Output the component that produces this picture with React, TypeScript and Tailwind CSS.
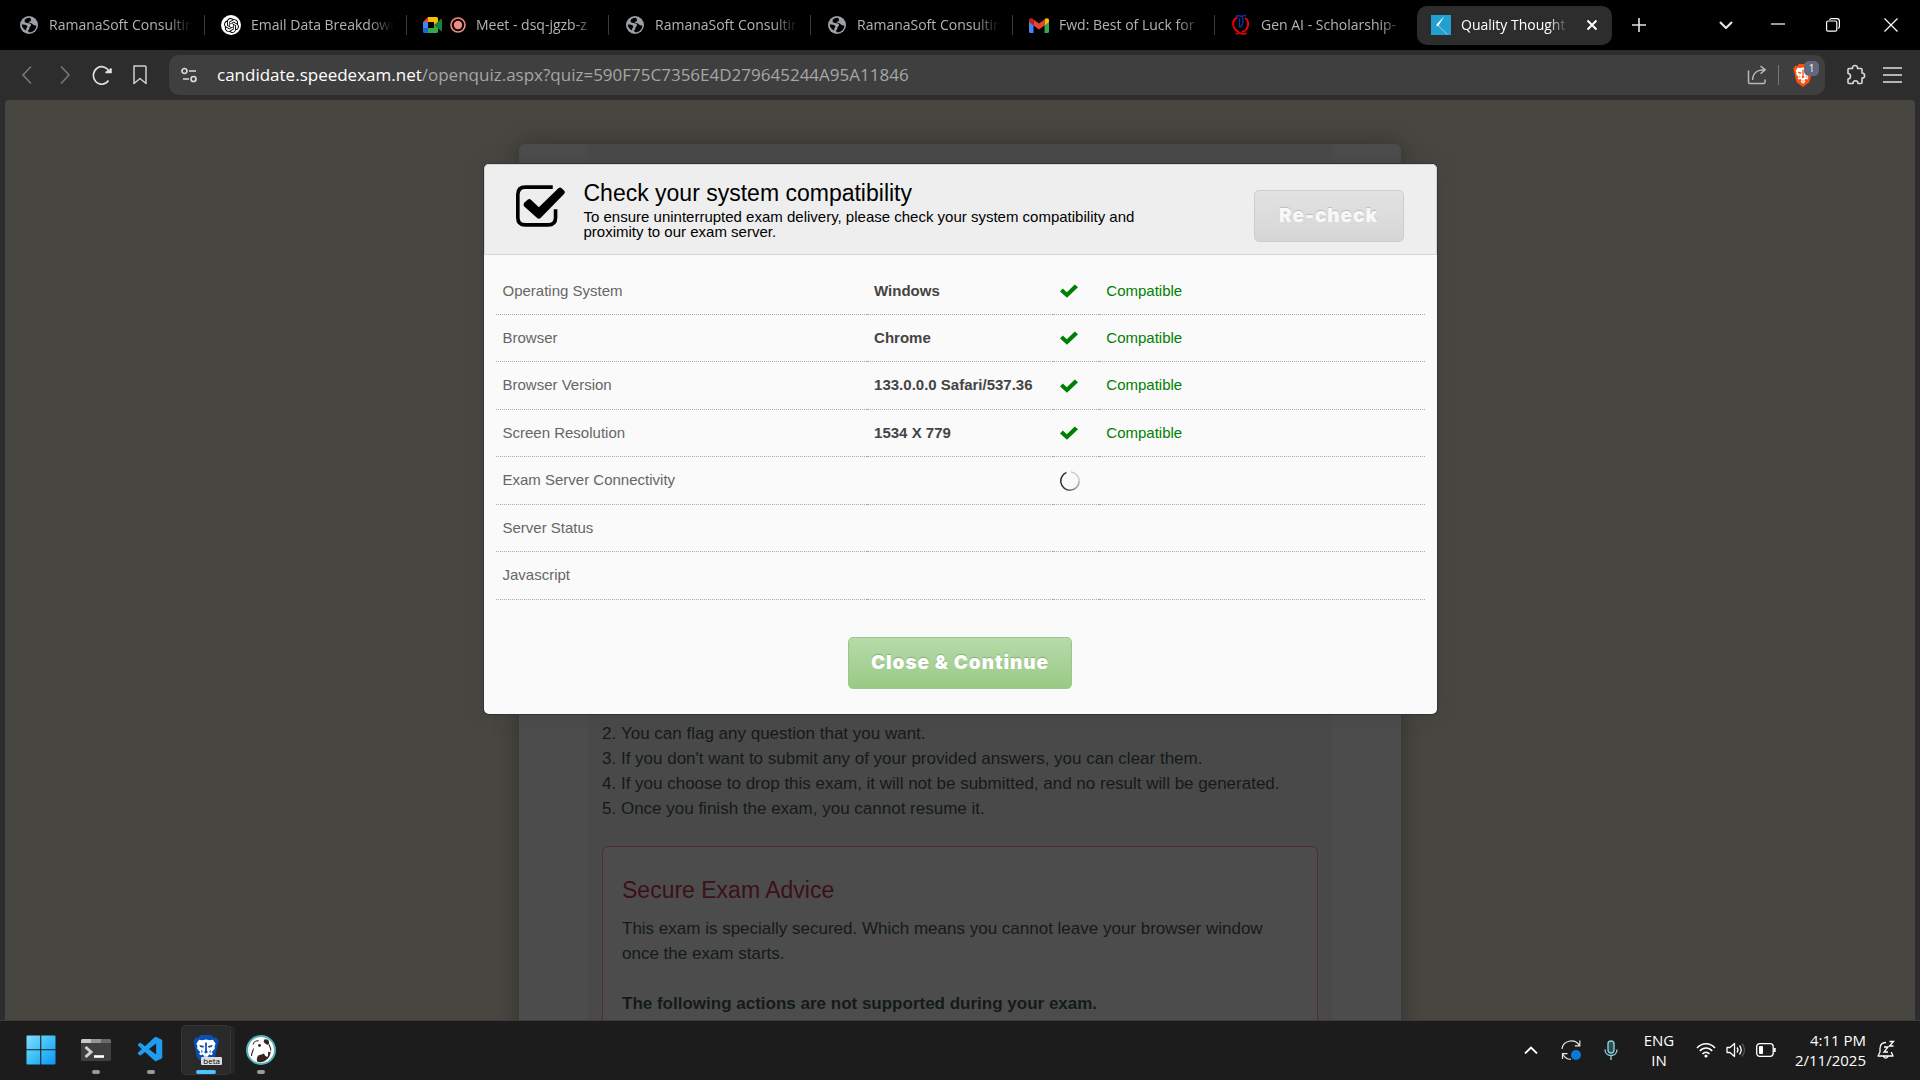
import React from "react";
import { SiOpenai } from "react-icons/si";
import { VscVscode } from "react-icons/vsc";

const uiFont = "font-['Open_Sans','Noto_Sans',sans-serif]";

function GlobeIcon() {
  return (
    <span className="flex h-5 w-5 shrink-0 items-center justify-center">
      <svg viewBox="0 0 18 18" className="h-[18px] w-[18px]">
        <circle cx="9" cy="9" r="9" fill="#9aa0a6" />
        <path d="M10 1.800C7.500 1.700 5.200 2.900 4.600 4.300c-.5 1.600.9 2.600 2.600 2.700 2.400.1 3.600.5 3.800 2 .1 1.400-1.500 1.500-1.600 2.900-.1 1.400-.8 2.300-1.800 2.300l1.400 2c4 .2 7.300-2.800 7.300-6.800-1.200.4-2.300.2-3.300-.9-.9-1-2.400-1.600-3.600-1.700-.9-.1-.8-1 .1-1.200 1-.2 1.700-.9 1.500-1.900z" fill="#000" />
        <path d="M1.800 8.600c1.800-.3 3.600 0 4.700.7 1.200.8.900 2 .1 2.700-.7.600-.5 1.600-.3 2.600C3.500 13.500 1.800 11.300 1.800 8.600z" fill="#000" />
      </svg>
    </span>
  );
}

function ChatIcon() {
  return (
    <span className="flex h-5 w-5 shrink-0 items-center justify-center rounded-full bg-white text-black">
      <SiOpenai size={15} />
    </span>
  );
}

function MeetIcon() {
  return (
    <svg viewBox="0 0 20 16" className="h-4 w-5 shrink-0">
      <path d="M0 5L5 0v5z" fill="#ea4335" />
      <path d="M5 0h8.500Q15 0 15 1.500V7l-4 2V5H5z" fill="#fbbc04" />
      <path d="M0 5h5v6H0z" fill="#4285f4" />
      <path d="M0 11h5v5H1.500Q0 16 0 14.500z" fill="#1967d2" />
      <path d="M5 11h6V8l4-2v8.500q0 1.500-1.500 1.500H5z" fill="#34a853" />
      <path d="M11 8l7-6q1-.8 1 .4v11.200q0 1.200-1 .4z" fill="#188038" />
    </svg>
  );
}

function RecordIcon() {
  return (
    <svg viewBox="0 0 16 16" className="h-4 w-4 shrink-0">
      <circle cx="8" cy="8" r="7" fill="none" stroke="#f28b82" strokeWidth="1.600" />
      <circle cx="8" cy="8" r="4.200" fill="#f28b82" />
    </svg>
  );
}

function GmailIcon() {
  return (
    <svg viewBox="0 0 20 15" className="h-[15px] w-5 shrink-0">
      <path d="M0 3v10.500Q0 15 1.500 15H4.500V6z" fill="#4285f4" />
      <path d="M20 3v10.500q0 1.500-1.500 1.500H15.500V6z" fill="#34a853" />
      <path d="M15.500 1.500l1.200-.9C18.300-.5 20 .6 20 2.200V4l-4.500 3.500z" fill="#fbbc04" />
      <path d="M4.500 7.500v-6L10 5.600l5.500-4.100v6L10 11.600z" fill="#ea4335" />
      <path d="M0 2.200C0 .6 1.700-.5 3.300.6l1.200.9v6L0 4z" fill="#c5221f" />
    </svg>
  );
}

function QIcon() {
  return (
    <svg viewBox="0 0 20 22" className="h-[22px] w-5 shrink-0" fill="none">
      <path d="M6.500 3.500C.5 5.500.5 15.500 8 18" stroke="#e8000b" strokeWidth="2" />
      <path d="M14 4c5 3 4 12-3 14" stroke="#e8000b" strokeWidth="2" />
      <path d="M5 20.500c2-2.600 4-1.800 6-.8s3 .5 4.500-.8" stroke="#e8000b" strokeWidth="1.600" />
      <path d="M5 2.800c2-2.200 4-.3 6-.6s2.500-.8 4-1" stroke="#0b34b0" strokeWidth="1.500" />
      <path d="M8.500 4v9.500M11.500 3c.8 3 .8 7-2 10.500" stroke="#0b34b0" strokeWidth="1.300" />
    </svg>
  );
}

function SpeedIcon() {
  return (
    <svg viewBox="0 0 20 20" className="h-5 w-5 shrink-0">
      <rect width="20" height="20" fill="#22a0cf" />
      <path d="M13.500 1L5 10l2 1.500z" fill="#fff" />
      <path d="M6.500 10l10 9.500L8 11.500z" fill="#fff" stroke="#fff" strokeWidth=".5" opacity=".6" />
    </svg>
  );
}

function LionShield({ fill, className }: { fill: string; className: string }) {
  return (
    <svg viewBox="0 0 24 28" className={className}>
      <path d="M7 0h10l2.300 2.600 2-.5L24 5.500l-1 3L20.500 20q-.5 2-2 3L12 28l-6.500-5q-1.500-1-2-3L1 8.500l-1-3 2.700-3.400 2 .5z" fill={fill} />
      <path d="M5.500 4.500l3 .5L12 4.200l3.500.8 3-.5L21 8.200l-1 2 .3 2.300-3 3.500 1.200 1.500-1.500 1.300-2-.5-1.300 1.500 1.300 1.400L12 24l-3-2.800 1.300-1.400L9 18.300l-2 .5-1.500-1.300L6.700 16l-3-3.500.3-2.300-1-2z" fill="#fff" />
      <path d="M5.800 9.300l4.500.9-.8 1.700-3-.6zM18.200 9.300l-4.500.9.8 1.700 3-.6zM11.200 7h1.600v7.500l1 1.500-1.800 1.200-1.800-1.200 1-1.500zM7.300 13.500l1.700 2.200-1 1zM16.700 13.500L15 15.700l1 1zM10 20.300h4l-2 1.400z" fill={fill} />
    </svg>
  );
}

const tabs: { title: string; icons: React.ReactNode }[] = [
  { title: "RamanaSoft Consulting", icons: <GlobeIcon /> },
  { title: "Email Data Breakdown", icons: <ChatIcon /> },
  { title: "Meet - dsq-jgzb-z", icons: <><MeetIcon /><RecordIcon /></> },
  { title: "RamanaSoft Consulting", icons: <GlobeIcon /> },
  { title: "RamanaSoft Consulting", icons: <GlobeIcon /> },
  { title: "Fwd: Best of Luck for", icons: <GmailIcon /> },
  { title: "Gen AI - Scholarship-", icons: <QIcon /> },
];

function TabBar() {
  return (
    <div className="flex h-[50px] shrink-0 items-center bg-black pl-[3px] text-sm">
      <div className="flex min-w-0 items-center">
        {tabs.map((t, i) => (
          <button
            key={i}
            className={
              "flex h-5 w-[202px] min-w-0 shrink items-center gap-[10px] pr-3 pl-4 text-[#b4b4b4] " +
              (i < tabs.length - 1 ? "border-r border-[#3a3a3a]" : "")
            }
          >
            <span className="flex items-center gap-[7px]">{t.icons}</span>
            <span className="min-w-0 flex-1 overflow-hidden text-left whitespace-nowrap [mask-image:linear-gradient(to_right,black_82%,transparent)]">
              {t.title}
            </span>
          </button>
        ))}
        <div className="flex h-[39px] w-[195px] items-center gap-[10px] rounded-[10px] bg-[#2d2d2d] px-[14px] text-white">
          <SpeedIcon />
          <span className="min-w-0 flex-1 overflow-hidden whitespace-nowrap [mask-image:linear-gradient(to_right,black_82%,transparent)]">
            Quality Thought
          </span>
          <button aria-label="Close tab" className="ml-2">
            <svg viewBox="0 0 12 12" className="h-3 w-3" stroke="#fff" strokeWidth="2">
              <path d="M1.500 1.500l9 9M10.500 1.500l-9 9" />
            </svg>
          </button>
        </div>
        <button aria-label="New tab" className="ml-5">
          <svg viewBox="0 0 14 14" className="h-[14px] w-[14px]" stroke="#e4e4e4" strokeWidth="1.600">
            <path d="M7 0v14M0 7h14" />
          </svg>
        </button>
      </div>
      <div className="ml-auto flex items-center pr-[22px]">
        <button aria-label="Search tabs" className="mr-[38px]">
          <svg viewBox="0 0 14 8" className="h-2 w-[14px]" fill="none" stroke="#e4e4e4" strokeWidth="2.200">
            <path d="M1 1l6 6 6-6" />
          </svg>
        </button>
        <button aria-label="Minimize" className="mr-[41px]">
          <svg viewBox="0 0 14 14" className="h-[14px] w-[14px]" stroke="#fff" strokeWidth="1.200">
            <path d="M0 6h14" />
          </svg>
        </button>
        <button aria-label="Restore" className="mr-[44px]">
          <svg viewBox="0 0 14 14" className="h-[14px] w-[14px]" fill="none" stroke="#fff" strokeWidth="1.200">
            <rect x=".6" y="3" width="10.200" height="10.200" rx="1.500" />
            <path d="M3.500 1.800Q4 .6 5.500.6H11q2.400 0 2.400 2.400v5.600q0 1.400-1.200 1.800" />
          </svg>
        </button>
        <button aria-label="Close window">
          <svg viewBox="0 0 14 14" className="h-[14px] w-[14px]" stroke="#fff" strokeWidth="1.200">
            <path d="M.5.5l13 13M13.500.5l-13 13" />
          </svg>
        </button>
      </div>
    </div>
  );
}

function Toolbar() {
  return (
    <div className="flex h-[50px] shrink-0 items-center bg-[#2d2d2d] pr-[18px] pl-4">
      <div className="flex items-center gap-[18px]">
        <button aria-label="Back">
          <svg viewBox="0 0 20 20" className="h-5 w-5" fill="none" stroke="#777" strokeWidth="1.600">
            <path d="M15 1.500L7 10l8 8.500" />
          </svg>
        </button>
        <button aria-label="Forward">
          <svg viewBox="0 0 20 20" className="h-5 w-5" fill="none" stroke="#777" strokeWidth="1.600">
            <path d="M7 1.500l8 8.500-8 8.500" />
          </svg>
        </button>
        <button aria-label="Reload">
          <svg viewBox="0 0 20 20" className="h-5 w-5" fill="none" stroke="#e0e0e0" strokeWidth="1.600">
            <path d="M17.500 7.500A8.300 8.800 0 1 0 16.500 15.500" />
            <path d="M13.500 7.500h5.500V3.500q-1.500 3-5.500 4z" fill="#e0e0e0" />
          </svg>
        </button>
        <button aria-label="Bookmark">
          <svg viewBox="0 0 20 20" className="h-5 w-5" fill="none" stroke="#d0d0d0" strokeWidth="1.500">
            <path d="M4 1h11q1 0 1 1v16.500l-6-5-6 5V2q0-1 1-1z" strokeLinejoin="round" />
          </svg>
        </button>
      </div>
      <div className="ml-[19px] flex h-10 min-w-0 flex-1 items-center rounded-[10px] bg-[#3f3f3f] pr-[6px] pl-3">
        <button aria-label="Site settings">
          <svg viewBox="0 0 16 16" className="h-4 w-4" fill="none" stroke="#dadada" strokeWidth="1.700">
            <circle cx="3.500" cy="4" r="2.500" />
            <path d="M8 4h7M2 12h6" />
            <circle cx="12.500" cy="12" r="2.500" />
          </svg>
        </button>
        <div className="ml-5 min-w-0 flex-1 overflow-hidden text-[17px] whitespace-nowrap text-[#a6a6a6]">
          <span className="text-white">candidate.speedexam.net</span>
          /openquiz.aspx?quiz=590F75C7356E4D279645244A95A11846
        </div>
        <button aria-label="Share">
          <svg viewBox="0 0 20 20" className="h-5 w-5" fill="none" stroke="#b8b8b8" strokeWidth="1.500">
            <path d="M1.500 5.500V17q0 1.500 1.500 1.500h13.500q1.500 0 1.500-1.500v-2.500" />
            <path d="M5.500 15C6 8 9.500 4.800 18 4.800M13.500 1l4.700 3.800-4.700 4" />
          </svg>
        </button>
        <span className="mx-[11px] h-5 w-px bg-[#777]" />
        <button aria-label="Brave Shields" className="relative flex h-7 w-[29px] items-center">
          <LionShield fill="#fb5012" className="ml-[3px] h-[23px] w-5" />
          <span className="absolute top-0 right-0 flex h-[15px] w-[15px] items-center justify-center rounded-[5px] bg-[#62677a] text-[10px] text-white">
            1
          </span>
        </button>
      </div>
      <button aria-label="Extensions" className="ml-[19px]">
        <svg viewBox="0 0 22 22" className="h-[22px] w-[22px]" fill="none" stroke="#d8d8d8" strokeWidth="1.600" strokeLinejoin="round">
          <path d="M5 4.500h3.500c-.8-4 5.800-4 5 0H17q1 0 1 1V9c3.500.4 3.500 5 0 5v4.500q0 1-1 1h-3c0-3.700-5-3.700-5 0H5q-1 0-1-1V15c3.300 0 3.300-5.500 0-5.500v-4q0-1 1-1z" />
        </svg>
      </button>
      <button aria-label="Menu" className="ml-[17px]">
        <svg viewBox="0 0 19 16" className="h-4 w-[19px]" stroke="#e0e0e0" strokeWidth="1.700">
          <path d="M0 1h19M0 8h19M0 15h19" />
        </svg>
      </button>
    </div>
  );
}

const checks: { name: string; value: string; state: "ok" | "loading" | "none" }[] = [
  { name: "Operating System", value: "Windows", state: "ok" },
  { name: "Browser", value: "Chrome", state: "ok" },
  { name: "Browser Version", value: "133.0.0.0 Safari/537.36", state: "ok" },
  { name: "Screen Resolution", value: "1534 X 779", state: "ok" },
  { name: "Exam Server Connectivity", value: "", state: "loading" },
  { name: "Server Status", value: "", state: "none" },
  { name: "Javascript", value: "", state: "none" },
];

function StateIcon({ state }: { state: string }) {
  if (state === "ok")
    return (
      <svg viewBox="0 0 18 14" className="h-[14px] w-[18px]" fill="#008000">
        <path d="M0 7.500L2.800 4.600l4 3.600L14.800.4 18 3.200 7 13.800z" />
      </svg>
    );
  if (state === "loading")
    return (
      <svg viewBox="0 0 20 20" className="h-5 w-5" fill="none" strokeWidth="1.400">
        <defs>
          <linearGradient id="spin" x1="0" y1="0" x2="1" y2="0">
            <stop offset="0" stopColor="#222" />
            <stop offset="1" stopColor="#aaa" />
          </linearGradient>
        </defs>
        <path d="M6.500 1.500A9.200 9.200 0 0 0 10 19.200a9.200 9.200 0 0 0 9.200-9.200" stroke="url(#spin)" />
        <path d="M19.200 10A9.200 9.200 0 0 0 11 1" stroke="#ccc" />
      </svg>
    );
  return null;
}

function CompatibilityDialog() {
  return (
    <section
      role="dialog"
      aria-labelledby="dialog-title"
      className="flex w-full max-w-[953px] flex-col rounded-[5px] bg-[#fafafa] shadow-[0_0_0_1px_#333,0_0_16px_rgba(60,60,60,0.5)]"
    >
      <header className="flex h-[91px] items-start rounded-t-[5px] border border-[#d5d5d5] bg-[#eeeeee] pr-8 pl-[31px]">
        <svg viewBox="0 0 148 125" className="mt-5 h-[42px] w-[49px] shrink-0">
          <path
            d="M111 5.500H28Q5.500 5.500 5.500 28v69q0 22.500 22.500 22.500h69q22.500 0 22.500-22.500V72"
            fill="none"
            stroke="#000"
            strokeWidth="11"
          />
          <path
            d="M25 53l11-10q5-3 10 1l23 22 59-57q5-5 10 0l7 7q5 5 0 10l-70 72q-6 6-12 0L25 64q-4-5 0-11z"
            fill="#000"
          />
        </svg>
        <div className="mt-3 ml-[19px] w-[560px] text-black">
          <h1 id="dialog-title" className="text-[23px] leading-8">Check your system compatibility</h1>
          <p className="text-[15px] leading-[15px]">
            To ensure uninterrupted exam delivery, please check your system compatibility and proximity to our exam server.
          </p>
        </div>
        <button className="mt-[25px] ml-auto h-[52px] w-[150px] rounded-[5px] border border-[#cdcdcd] bg-linear-to-b from-[#e2e2e2] to-[#d6d6d6] font-['Inter',sans-serif] text-[19px] font-black tracking-wider text-[#f8f8f8] [text-shadow:0_-1px_1px_rgba(0,0,0,0.15)]">
          Re-check
        </button>
      </header>
      <div className="px-3 pt-[13px]">
        <table className="h-[332px] w-full table-fixed border-collapse text-[15px]">
          <colgroup>
            <col className="w-[40%]" />
            <col className="w-[20%]" />
            <col className="w-[5%]" />
            <col className="w-[35%]" />
          </colgroup>
          <tbody>
            {checks.map((c) => (
              <tr key={c.name} className="border-b border-dotted border-[#aaaaaa]">
                <th scope="row" className="px-[7px] text-left font-normal text-[#666]">{c.name}</th>
                <td className="px-[7px] font-bold whitespace-nowrap text-[#444]">{c.value}</td>
                <td className="pl-[7px]"><StateIcon state={c.state} /></td>
                <td className="px-[7px] text-[#008000]">{c.state === "ok" ? "Compatible" : ""}</td>
              </tr>
            ))}
          </tbody>
        </table>
      </div>
      <div className="flex justify-center pt-[37px] pb-[25px]">
        <button className="h-[52px] w-[224px] rounded-[5px] border border-[#97c986] bg-linear-to-b from-[#b7dbaa] to-[#98ca84] font-['Inter',sans-serif] text-[19px] font-black tracking-wider text-white [text-shadow:0_-1px_1px_rgba(0,0,0,0.2)]">
          Close &amp; Continue
        </button>
      </div>
    </section>
  );
}

function ExamPage() {
  return (
    <main className="relative mr-[5px] ml-[5px] min-h-0 flex-1 overflow-hidden rounded-t-[4px] bg-[#484641] px-6 pt-11 font-['Liberation_Sans',Arial,sans-serif]">
      <div className="mx-auto max-w-[882px] rounded-[6px] bg-[#4c4c4c] px-[69px] shadow-[0_0_24px_rgba(0,0,0,0.3)]">
        <div className="bg-[#494949] px-[14px] pt-[577px] pb-20 text-[17px] leading-[25px] text-[#141a1a]">
          <ol start={2} className="list-inside list-decimal">
            <li>You can flag any question that you want.</li>
            <li>If you don't want to submit any of your provided answers, you can clear them.</li>
            <li>If you choose to drop this exam, it will not be submitted, and no result will be generated.</li>
            <li>Once you finish the exam, you cannot resume it.</li>
          </ol>
          <div className="mt-[25px] rounded-[6px] border border-[#4d2d33] bg-[#4c4c4c] px-[19px] pt-7 pb-10">
            <h2 className="text-[23px] leading-[30px] text-[#3d1018]">Secure Exam Advice</h2>
            <p className="mt-[11px]">
              This exam is specially secured. Which means you cannot leave your browser window once the exam starts.
            </p>
            <p className="mt-[25px] font-bold">The following actions are not supported during your exam.</p>
          </div>
        </div>
      </div>
      <div className="absolute inset-0 flex items-start justify-center px-6 pt-16">
        <CompatibilityDialog />
      </div>
    </main>
  );
}

function WindowsIcon() {
  return (
    <svg viewBox="0 0 30 30" className="h-[30px] w-[30px]">
      <defs>
        <linearGradient id="win" x1="0" y1="0" x2="1" y2="1">
          <stop offset="0" stopColor="#86dcfb" />
          <stop offset=".5" stopColor="#3cc0f8" />
          <stop offset="1" stopColor="#0a95f5" />
        </linearGradient>
      </defs>
      <path d="M.5 1.500q0-1 1-1h12.700v13.700H.5zM15.300.5H28.500q1 0 1 1v12.700H15.300zM.5 15.300h13.700v14.200H1.500q-1 0-1-1zM15.300 15.300h14.200v13.200q0 1-1 1H15.300z" fill="url(#win)" />
    </svg>
  );
}

function TerminalIcon() {
  return (
    <svg viewBox="0 0 30 22" className="h-[22px] w-[30px]">
      <rect width="30" height="22" rx="1.500" fill="#3f3f3f" />
      <path d="M0 4V1.500Q0 0 1.500 0H10v4z" fill="#c9c9c9" />
      <path d="M10 0h10v4H10z" fill="#959595" />
      <path d="M20 0h8.500Q30 0 30 1.500V4H20z" fill="#6a6a6a" />
      <path d="M4.500 8l5.500 5-5.500 5" fill="none" stroke="#d0d0d0" strokeWidth="3" />
      <path d="M13 17.500h10" stroke="#fff" strokeWidth="2.600" />
    </svg>
  );
}

function BeaverIcon() {
  return (
    <svg viewBox="0 0 30 30" className="h-[30px] w-[30px]">
      <circle cx="15" cy="15" r="14" fill="#fff" stroke="#4fb3b8" strokeWidth="2" />
      <path d="M11 26.500C10.500 22 12 20 14.500 19.800c1.500-.1 2.500-1 3.500-1.200.6 2 1.800 3.400 3.600 3.200.8-1.600.6-3.600.2-5.600 1.200 1.400 2.400 1.200 3-.4-.2 5-2.600 8.600-6.800 10.600-2.300.9-4.900 1-7 .1z" fill="#33241e" />
      <path d="M18.500 4.500c2.500-.6 4.500.6 4.600 3 .1 1.600-.6 2.500-1.600 2.200-1.500-.4-3.400-1.700-4-3.200z" fill="#33241e" />
      <circle cx="13.500" cy="10.500" r="1.400" fill="#33241e" />
      <path d="M7 9.500c.5-2.500 3-4 5.500-3.600M5.500 21c0-3 1.500-5 2-7.500M23 9.500c1 2 1.800 4 1.800 6" fill="none" stroke="#33241e" strokeWidth="1.100" />
    </svg>
  );
}

function TaskItem({ label, running, active, children }: { label: string; running?: boolean; active?: boolean; children: React.ReactNode }) {
  return (
    <button
      aria-label={label}
      className={
        "relative flex h-[50px] w-[50px] items-center justify-center rounded-[5px] " +
        (active ? "border border-[#363636] bg-[#2a2a2a] shadow-[5px_0_0_-1px_#262626]" : "")
      }
    >
      {children}
      {running && !active && <span className="absolute bottom-px h-1 w-2 rounded-full bg-[#9a9a9a]" />}
      {active && <span className="absolute bottom-0 h-1 w-5 rounded-full bg-[#4cc2ff]" />}
    </button>
  );
}

function Taskbar() {
  return (
    <footer className="flex h-[60px] shrink-0 items-center border-t border-[#3c3c3c] bg-[#1c1c1c] pb-px text-white">
      <div className="flex items-center gap-[5px] pl-4">
        <TaskItem label="Start"><WindowsIcon /></TaskItem>
        <TaskItem label="Terminal" running><TerminalIcon /></TaskItem>
        <TaskItem label="Visual Studio Code" running>
          <VscVscode size={30} className="text-[#1f9cf0]" />
        </TaskItem>
        <TaskItem label="Brave Beta" active>
          <span className="relative flex h-[30px] w-7 items-center justify-center">
            <LionShield fill="#0a4fb4" className="h-[30px] w-[26px]" />
            <span className="absolute right-[-2px] bottom-0 h-2 rounded-[1px] bg-[#dcdcdc] px-[2px] text-[8px] leading-[7px] text-black">beta</span>
          </span>
        </TaskItem>
        <TaskItem label="DBeaver" running><BeaverIcon /></TaskItem>
      </div>
      <div className="ml-auto flex items-center pr-[25px]">
        <button aria-label="Show hidden icons" className="mr-[23px]">
          <svg viewBox="0 0 14 8" className="h-2 w-[14px]" fill="none" stroke="#fff" strokeWidth="1.800">
            <path d="M1 7.500l6-6 6 6" />
          </svg>
        </button>
        <button aria-label="Updates" className="mr-[23px]">
          <svg viewBox="0 0 20 22" className="h-[22px] w-5" fill="none" stroke="#e8e8e8" strokeWidth="1.200">
            <path d="M1 10C1.500 2.500 13-2 18.500 6.500M18.800 1.500v5.400h-5" />
            <path d="M1.500 20v-5.400h5M2 15.500C4 19 7 20.500 10 20.200" />
            <circle cx="15" cy="16" r="5" fill="#0a78d7" stroke="none" />
          </svg>
        </button>
        <button aria-label="Microphone" className="mr-[25px]">
          <svg viewBox="0 0 14 20" className="h-5 w-[14px]" fill="none" stroke="#84d0e0" strokeWidth="1.400">
            <rect x="4" y="1" width="6" height="12" rx="3" fill="#84d0e0" fillOpacity=".25" />
            <path d="M1 9.500c0 8 12 8 12 0M7 15.500V20" />
          </svg>
        </button>
        <button className="mr-[21px] w-8 text-center text-[15px] leading-5">ENG<br />IN</button>
        <button aria-label="Network, volume and battery" className="mr-[19px] flex items-center gap-[10px]">
          <svg viewBox="0 0 20 16" className="h-4 w-5" fill="none" stroke="#fff" strokeWidth="1.500">
            <path d="M1 6C6 .2 14 .2 19 6M3.800 9c3.500-4 9-4 12.400 0M6.500 12c2-2.400 5-2.400 7 0" />
            <circle cx="10" cy="14" r="1.600" fill="#fff" stroke="none" />
          </svg>
          <svg viewBox="0 0 20 16" className="h-4 w-5" fill="none" stroke="#fff" strokeWidth="1.300">
            <path d="M1 5.500h3L8.500 1.500v13L4 10.500H1z" strokeLinejoin="round" />
            <path d="M11 5.500q2 2.500 0 5M13.500 3.500q3.500 4.500 0 9" />
            <path d="M16 1.500q5 6.500 0 13" stroke="#555" />
          </svg>
          <svg viewBox="0 0 20 14" className="h-[14px] w-5" fill="none" stroke="#fff" strokeWidth="1.300">
            <rect x=".7" y=".7" width="16.500" height="12.600" rx="3" />
            <rect x="3" y="3" width="4" height="8" rx="1" fill="#fff" stroke="none" />
            <path d="M18.700 5v4" strokeWidth="2" />
          </svg>
        </button>
        <button className="text-right text-[15px] leading-5">4:11 PM<br />2/11/2025</button>
        <button aria-label="Notifications" className="ml-[11px]">
          <svg viewBox="0 0 18 20" className="h-5 w-[18px]" fill="none" stroke="#fff" strokeWidth="1.300">
            <path d="M9 2.500C5 2.500 3 5 3 8.500V12l-2 4h15l-1.500-3.500V12M6.500 16.500q2.200 3.400 4.500 0" strokeLinejoin="round" />
            <path d="M7 7h4l-4 5h4M12.500 1.500h4l-4 4.500h4" />
          </svg>
        </button>
      </div>
    </footer>
  );
}

export default function App() {
  return (
    <div className={"flex h-screen flex-col overflow-hidden bg-[#2d2d2d] " + uiFont}>
      <TabBar />
      <Toolbar />
      <ExamPage />
      <Taskbar />
    </div>
  );
}
